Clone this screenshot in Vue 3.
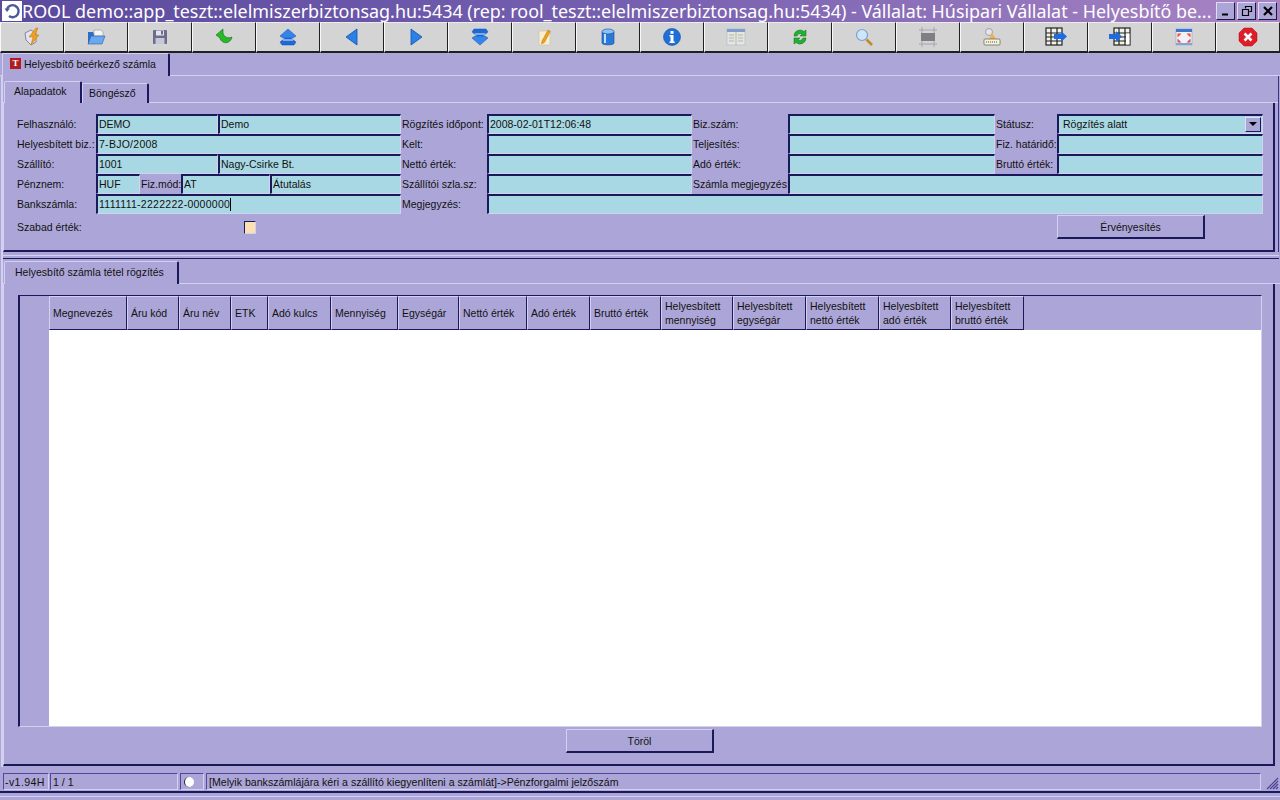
<template>
  <div class="win">
    <div class="titlebar">
      <span class="appicon">
        <svg width="18" height="18" viewBox="0 0 18 18"><path d="M4 7 A6 6 0 1 1 6 14" fill="none" stroke="#4a5a9a" stroke-width="2.4" /><path d="M1.5 6.5 L7 6.5 L4 10 Z" fill="#4a5a9a" /></svg>
      </span>
      <span class="title">ROOL demo::app_teszt::elelmiszerbiztonsag.hu:5434 (rep: rool_teszt::elelmiszerbiztonsag.hu:5434) - Vállalat: Húsipari Vállalat - Helyesbítő be...</span>
      <div class="winbtns">
        <span class="winbtn"><svg width="12" height="12" viewBox="0 0 12 12"><path d="M2 9.5h6" stroke="#000" stroke-width="2" /></svg></span>
        <span class="winbtn"><svg width="12" height="12" viewBox="0 0 12 12"><path d="M4.5 3.5V1.5h6v5h-2M1.5 4.5h6v6h-6z" fill="none" stroke="#000" stroke-width="1.2" /></svg></span>
        <span class="winbtn"><svg width="12" height="12" viewBox="0 0 12 12"><path d="M2 2l8 8M10 2l-8 8" stroke="#000" stroke-width="2.2" /></svg></span>
      </div>
    </div>

    <div class="toolbar">
      <button class="tb"><svg viewBox="0 0 20 20"><path d="M3 6l6-3 5 3v9l-5 3-5-5z" fill="#e4e4ee" stroke="#8484a4" /><path d="M14 1L7 10h4l-2 8 8-10h-4l3-7z" fill="#f0a020" stroke="#c07010" stroke-width=".5" /></svg></button>
      <button class="tb"><svg viewBox="0 0 20 20"><path d="M2 5h5l1 2h7v10H2z" fill="#2f6cc4" /><path d="M8 3h7l2 2v4H8z" fill="#f4f4f4" stroke="#9090a0" stroke-width=".6" /><path d="M2 17l3-8h14l-3 8z" fill="#6aa8ee" stroke="#2a5aa8" stroke-width=".6" /></svg></button>
      <button class="tb"><svg viewBox="0 0 20 20"><rect x="3" y="3" width="14" height="14" rx="1" fill="#6c6c8c" /><rect x="6" y="3.5" width="8" height="5" fill="#e4e4ec" /><rect x="5.5" y="11" width="9" height="6" fill="#c8c8d8" /><rect x="11" y="4" width="2" height="3.5" fill="#6c6c8c" /></svg></button>
      <button class="tb"><svg viewBox="0 0 20 20"><path d="M2 8L9 2V6C10 10 14 12 18 10C17 15 12 17 9 15C7 14 6 12 6 11Z" fill="#2ab82a" stroke="#0c7016" stroke-width=".6" /></svg></button>
      <button class="tb"><svg viewBox="0 0 20 20"><path d="M10 9l8 6-2 3H4l-2-3z" fill="#1f68d8" stroke="#1250b0" stroke-width=".5" /><path d="M10 2l8 7-3 2H5L2 9z" fill="#3484ea" stroke="#1250b0" stroke-width=".5" /><path d="M5 13h10" stroke="#bcd8fa" stroke-width="1.2" /></svg></button>
      <button class="tb"><svg viewBox="0 0 20 20"><path d="M15 2v16L4 10z" fill="#2a80e4" stroke="#1250b0" stroke-width=".8" /></svg></button>
      <button class="tb"><svg viewBox="0 0 20 20"><path d="M5 2v16l11-8z" fill="#2a80e4" stroke="#1250b0" stroke-width=".8" /></svg></button>
      <button class="tb"><svg viewBox="0 0 20 20"><path d="M10 11l8-6-2-3H4L2 5z" fill="#1f68d8" stroke="#1250b0" stroke-width=".5" /><path d="M10 18l8-7-3-2H5L2 11z" fill="#3484ea" stroke="#1250b0" stroke-width=".5" /><path d="M5 7h10" stroke="#bcd8fa" stroke-width="1.2" /></svg></button>
      <button class="tb"><svg viewBox="0 0 20 20"><rect x="5" y="4" width="11" height="14" fill="#f6efcf" stroke="#c8c0a0" stroke-width=".6" /><path d="M8 14L14 3l2.4 1.4-6 11L7.5 17z" fill="#f0a020" stroke="#b87010" stroke-width=".5" /></svg></button>
      <button class="tb"><svg viewBox="0 0 20 20"><path d="M4 5v11c0 2.5 12 2.5 12 0V5z" fill="#2a78d8" stroke="#124a9a" stroke-width=".6" /><ellipse cx="10" cy="4.5" rx="6" ry="2.5" fill="#8cc0f4" stroke="#124a9a" stroke-width=".6" /><rect x="6" y="7" width="2" height="9" fill="#bfe0fc" /></svg></button>
      <button class="tb"><svg viewBox="0 0 20 20"><circle cx="10" cy="10" r="8.5" fill="#1f6fd8" stroke="#1250a0" stroke-width=".6" /><rect x="8.5" y="4" width="3" height="2.8" fill="#fff" /><path d="M7.5 8h4v6.5h1.2V16H7.5v-1.5h1V9.5h-1z" fill="#fff" /></svg></button>
      <button class="tb"><svg viewBox="0 0 20 20"><rect x="1" y="2" width="18" height="16" fill="#e6e6e0" stroke="#a8b4cc" stroke-width=".6" /><rect x="1" y="2" width="18" height="3" fill="#7e9ccc" /><path d="M10 5v13M3 8h5M12 8h5M3 11h5M12 11h5M3 14h5M12 14h5" stroke="#b4b4b0" /></svg></button>
      <button class="tb"><svg viewBox="0 0 20 20"><path d="M4 9a6 6 0 0 1 10-4.5L16 3v6h-6l2-2a3.5 3.5 0 0 0-5 2z" fill="#22b030" stroke="#0c7016" stroke-width=".5" /><path d="M16 11a6 6 0 0 1-10 4.5L4 17v-6h6l-2 2a3.5 3.5 0 0 0 5-2z" fill="#22b030" stroke="#0c7016" stroke-width=".5" /></svg></button>
      <button class="tb"><svg viewBox="0 0 20 20"><circle cx="8" cy="8" r="5.5" fill="#cfe6fa" stroke="#7aa0c8" stroke-width="1.2" /><path d="M12.5 12.5l5.5 5.5" stroke="#c08a30" stroke-width="2.6" /></svg></button>
      <button class="tb"><svg viewBox="0 0 20 20"><path d="M1 3h18M1 17h18M4 0v20M16 0v20" stroke="#a4a4ae" /><rect x="3" y="6" width="14" height="8" fill="#808084" /></svg></button>
      <button class="tb"><svg viewBox="0 0 20 20"><circle cx="7" cy="5" r="3.5" fill="#e4e4ec" stroke="#9090a0" stroke-width=".8" /><path d="M10 6l4 6H7z" fill="#f0b050" /><rect x="2" y="12" width="16" height="6" rx="1" fill="#f4f2dc" stroke="#707060" stroke-width=".8" /><path d="M4 15h12" stroke="#505050" stroke-dasharray="1 1" /></svg></button>
      <button class="tb"><svg class="wide" viewBox="0 0 22 20"><rect x="1" y="1" width="16" height="17" fill="#f2f2e8" stroke="#222" stroke-width="1.2" /><path d="M1 6h16M1 10h16M1 14h16M6 1v17M12 1v17" stroke="#222" stroke-width="1.2" /><path d="M9 7h7V4l6 5.5-6 5.5v-3H9z" fill="#1c6ce0" /></svg></button>
      <button class="tb"><svg class="wide" viewBox="0 0 22 20"><rect x="5" y="1" width="16" height="17" fill="#f2f2e8" stroke="#222" stroke-width="1.2" /><path d="M5 6h16M5 10h16M5 14h16M10 1v17M16 1v17" stroke="#222" stroke-width="1.2" /><rect x="17" y="6.5" width="3.5" height="11" fill="#fff" /><path d="M0 7h7V4l6 5.5-6 5.5v-3H0z" fill="#1c6ce0" /></svg></button>
      <button class="tb"><svg viewBox="0 0 20 20"><rect x="2" y="2" width="16" height="16" fill="#f0f0f6" stroke="#8aa4cc" stroke-width=".6" /><rect x="2" y="2" width="16" height="3" fill="#3a78d0" /><rect x="2" y="16" width="16" height="2" fill="#7ea4dc" /><path d="M3.5 6.5h4l-4 4zM16.500 6.500h-4l4 4zM3.500 15.500h4l-4-4zM16.500 15.500h-4l4-4z" fill="#e84c40" /></svg></button>
      <button class="tb"><svg viewBox="0 0 20 20"><path d="M6 1h8l5 5v8l-5 5H6l-5-5V6z" fill="#e01c28" stroke="#a80c14" stroke-width=".5" /><path d="M6.5 6.5l7 7M13.5 6.5l-7 7" stroke="#fff" stroke-width="2.6" /></svg></button>
    </div>

    <div class="tabstrip outer-strip">
      <div class="tab tab-doc"><span class="t-icon">T</span>Helyesbítő beérkező számla</div>
    </div>

    <div class="pane">
      <div class="upper">
        <div class="tabstrip form-strip">
          <div class="tab tab-a">Alapadatok</div>
          <div class="tab tab-b">Böngésző</div>
        </div>
        <div class="panel form-panel">
          <div class="form">
            <label class="l">Felhasználó:</label>
            <div class="f s3">DEMO</div>
            <div class="f s2">Demo</div>
            <label class="l m">Rögzítés időpont:</label>
            <div class="f">2008-02-01T12:06:48</div>
            <label class="l m">Biz.szám:</label>
            <div class="f"></div>
            <label class="l m">Státusz:</label>
            <div class="f sel">Rögzítés alatt<span class="arrow"></span></div>

            <label class="l">Helyesbített biz.:</label>
            <div class="f s5 spaced">7-BJO/2008</div>
            <label class="l m">Kelt:</label>
            <div class="f"></div>
            <label class="l m">Teljesítés:</label>
            <div class="f"></div>
            <label class="l m">Fiz. határidő:</label>
            <div class="f"></div>

            <label class="l">Szállító:</label>
            <div class="f s3">1001</div>
            <div class="f s2">Nagy-Csirke Bt.</div>
            <label class="l m">Nettó érték:</label>
            <div class="f"></div>
            <label class="l m">Adó érték:</label>
            <div class="f"></div>
            <label class="l m">Bruttó érték:</label>
            <div class="f"></div>

            <label class="l">Pénznem:</label>
            <div class="f">HUF</div>
            <label class="l m">Fiz.mód:</label>
            <div class="f s2">AT</div>
            <div class="f">Átutalás</div>
            <label class="l m">Szállítói szla.sz:</label>
            <div class="f"></div>
            <label class="l m">Számla megjegyzés:</label>
            <div class="f s3"></div>

            <label class="l">Bankszámla:</label>
            <div class="f s5 spaced">1111111-2222222-0000000<span class="caret"></span></div>
            <label class="l m">Megjegyzés:</label>
            <div class="f s5"></div>

            <label class="l last">Szabad érték:</label>
            <span class="check"></span>
            <button class="btn valid">Érvényesítés</button>
          </div>
        </div>
      </div>

      <div class="splitter"></div>

      <div class="tabstrip items-strip">
        <div class="tab tab-items">Helyesbítő számla tétel rögzítés</div>
      </div>
      <div class="panel grid-panel">
        <div class="table">
          <div class="gutter"></div>
          <div class="tablebody">
            <div class="thead">
              <div v-for="c in columns" :key="c.label" class="th" :style="{ width: c.w + 'px' }">{{ c.label }}</div>
            </div>
            <div class="rows"></div>
          </div>
        </div>
        <div class="actions"><button class="btn del">Töröl</button></div>
      </div>
    </div>

    <div class="statusbar">
      <div class="st st-ver">-v1.94H</div>
      <div class="st st-pos">1 / 1</div>
      <div class="st st-led"><span class="led"></span></div>
      <div class="st st-msg">[Melyik bankszámlájára kéri a szállító kiegyenlíteni a számlát]-&gt;Pénzforgalmi jelzőszám</div>
      <svg class="grip" width="14" height="14" viewBox="0 0 14 14"><path d="M13 2L2 13M13 5L5 13M13 8L8 13M13 11l-2 2" stroke="#4a4290" stroke-width="1.2" /></svg>
    </div>
    <div class="footer"></div>
  </div>
</template>

<script setup>
const columns = [
  { label: 'Megnevezés', w: 78 },
  { label: 'Áru kód', w: 52 },
  { label: 'Áru név', w: 52 },
  { label: 'ETK', w: 37 },
  { label: 'Adó kulcs', w: 63 },
  { label: 'Mennyiség', w: 67 },
  { label: 'Egységár', w: 61 },
  { label: 'Nettó érték', w: 68 },
  { label: 'Adó érték', w: 63 },
  { label: 'Bruttó érték', w: 71 },
  { label: 'Helyesbített\nmennyiség', w: 72 },
  { label: 'Helyesbített\negységár', w: 73 },
  { label: 'Helyesbített\nnettó érték', w: 73 },
  { label: 'Helyesbített\nadó érték', w: 72 },
  { label: 'Helyesbített\nbruttó érték', w: 73 },
]
</script>

<style>
html, body { margin: 0; background: #aca6d8; overflow: hidden; }
</style>

<style scoped>
* { box-sizing: border-box; }
.win {
  width: 1280px;
  height: 800px;
  display: flex;
  flex-direction: column;
  background: #aca6d8;
  font-family: "Liberation Sans", Arial, sans-serif;
  font-size: 10.5px;
  color: #111;
  overflow: hidden;
}

/* title bar */
.titlebar {
  height: 22px;
  flex: none;
  display: flex;
  align-items: center;
  padding-left: 2px;
  background: linear-gradient(90deg, #5a4a9e, #7660b0 50%, #a884c4);
}
.appicon { width: 20px; height: 20px; background: #fff; display: flex; align-items: center; justify-content: center; flex: none; }
.title { color: #fff; font-family: "Noto Sans", sans-serif; font-size: 17.9px; white-space: nowrap; width: 1194px; flex: none; overflow: hidden; }
.winbtns { display: flex; gap: 2px; }
.winbtn {
  width: 19px;
  height: 18px;
  background: #aca6d8;
  border: 1px solid;
  border-color: #e0dcf4 #1a1a40 #1a1a40 #e0dcf4;
  display: flex;
  align-items: center;
  justify-content: center;
}

/* toolbar */
.toolbar { height: 31px; flex: none; display: flex; }
.tb {
  width: 64px;
  height: 31px;
  padding: 0;
  background: #d4d4d4;
  border: 0;
  border-top: 1px solid #ececec;
  border-left: 1px solid #fafafa;
  border-right: 1px solid #202020;
  border-bottom: 2px solid #202020;
  display: flex;
  align-items: center;
  justify-content: center;
}
.tb svg { width: 20px; height: 20px; display: block; }
.tb svg.wide { width: 22px; }

/* tabs */
.tabstrip { display: flex; align-items: flex-end; border-bottom: 1px solid #d4d0f0; flex: none; }
.tab {
  background: #aca6d8;
  border-top: 1px solid #d4d0f0;
  border-left: 1px solid #d4d0f0;
  border-right: 2px solid #1a1a5a;
  border-radius: 2px 2px 0 0;
  white-space: nowrap;
  display: flex;
  align-items: center;
  margin-bottom: -1px;
}
.outer-strip { height: 23px; padding-left: 2px; }
.tab-doc { width: 168px; height: 23px; padding-left: 7px; padding-bottom: 3px; }
.t-icon {
  width: 11px;
  height: 11px;
  margin-right: 3px;
  background: #b01c20;
  color: #fff;
  font: bold 9px/11px "Liberation Serif", serif;
  text-align: center;
}
.form-strip { height: 27px; padding-left: 1px; }
.tab-a { width: 78px; height: 22px; padding-left: 9px; padding-bottom: 3px; }
.tab-b { width: 67px; height: 20px; padding-left: 6px; padding-bottom: 1px; }

/* panes */
.pane { flex: none; height: 691px; margin-left: 1px; border-left: 2px solid #d4d0f0; }
.upper { border-right: 1px solid #3a3480; margin-right: 1px; }
.panel { border-right: 2px solid #1a1a5a; border-bottom: 2px solid #1a1a5a; border-left: 1px solid #d4d0f0; }
.form-panel { height: 149px; margin-right: 3px; padding: 11px 0 0 13px; }
.splitter { height: 7px; margin-right: 1px; border-bottom: 1px solid #1a1a5a; }
.splitter::before { content: ""; display: block; height: 3px; border-bottom: 1px solid #d4d0f0; }
.items-strip { height: 25px; padding-left: 1px; }
.tab-items { width: 175px; height: 23px; padding-left: 10px; padding-bottom: 3px; }
.grid-panel { height: 482px; margin-right: 5px; padding: 11px 0 0 14px; }

/* form */
.form {
  display: grid;
  grid-template-columns: 79px 44px 41px 37px 52px 131px 86px 205px 96px 207px 62px 206px;
  grid-auto-rows: 20px;
  white-space: nowrap;
}
.l { display: flex; align-items: center; padding-bottom: 1px; }
.m { padding-left: 1px; }
.f {
  background: #a8d8e4;
  border-top: 2px solid #1a1a5a;
  border-left: 2px solid #1a1a5a;
  border-right: 1px solid #d4d0f0;
  border-bottom: 1px solid #d4d0f0;
  padding-left: 1px;
  line-height: 15px;
  display: flex;
  align-items: center;
  position: relative;
}
.s2 { grid-column: span 2; }
.s3 { grid-column: span 3; }
.s5 { grid-column: span 5; }
.spaced { letter-spacing: .27px; }
.sel { padding-left: 4px; }
.arrow {
  position: absolute;
  right: 1px;
  top: 1px;
  width: 16px;
  height: 15px;
  background: #aca6d8;
  border: 1px solid;
  border-color: #e0dcf4 #1a1a5a #1a1a5a #e0dcf4;
}
.arrow::after {
  content: "";
  position: absolute;
  left: 3px;
  top: 4px;
  border: 4px solid transparent;
  border-top: 4px solid #000;
  border-bottom: 0;
}
.caret { display: inline-block; width: 1px; height: 13px; background: #000; }
.last { height: 26px; grid-column: span 4; }
.check {
  width: 12px;
  height: 13px;
  margin: 7px 0 0 26px;
  grid-column: 5;
  background: #fde0b0;
  border-top: 1px solid #1a1a5a;
  border-left: 1px solid #1a1a5a;
  border-right: 1px solid #d4d0f0;
  border-bottom: 1px solid #d4d0f0;
}
.btn {
  background: #aca6d8;
  border: 0;
  border-top: 1px solid #d4d0f0;
  border-left: 1px solid #d4d0f0;
  border-right: 2px solid #1a1a5a;
  border-bottom: 2px solid #1a1a5a;
  font: inherit;
  color: #111;
  padding: 0;
}
.valid { grid-column: 12; width: 148px; height: 24px; margin-top: 1px; }

/* table */
.table {
  display: flex;
  width: 1244px;
  height: 432px;
  border-top: 1px solid #1a1a5a;
  border-left: 2px solid #1a1a5a;
  border-right: 1px solid #d4d0f0;
  border-bottom: 1px solid #d4d0f0;
}
.gutter { width: 29px; flex: none; }
.tablebody { flex: 1; display: flex; flex-direction: column; }
.thead { height: 34px; flex: none; display: flex; }
.th {
  height: 34px;
  flex: none;
  padding-left: 3px;
  display: flex;
  align-items: center;
  white-space: pre-line;
  line-height: 14px;
  border-top: 1px solid #d4d0f0;
  border-left: 1px solid #d4d0f0;
  border-right: 1px solid #1a1a5a;
  border-bottom: 1px solid #1a1a5a;
}
.rows { flex: 1; background: #fff; }
.actions { display: flex; justify-content: center; margin-top: 2px; padding-right: 11px; }
.del { width: 148px; height: 24px; }

/* status bar */
.statusbar { height: 18px; margin-top: 6px; flex: none; display: flex; padding-left: 3px; gap: 1px; position: relative; white-space: nowrap; font-size: 10.6px; }
.st {
  height: 17px;
  padding-left: 2px;
  border-top: 1px solid #5048a0;
  border-left: 1px solid #5048a0;
  border-right: 1px solid #d4d0f0;
  border-bottom: 1px solid #d4d0f0;
  display: flex;
  align-items: center;
}
.st-ver { width: 46px; padding-left: 1px; letter-spacing: .4px; }
.st-pos { width: 128px; }
.st-led { width: 24px; margin-left: 1px; }
.st-msg { width: 1055px; margin-left: 1px; }
.led { width: 10px; height: 10px; margin-left: 1px; border-radius: 50%; background: #fff; border-left: 1px solid #222; }
.grip { position: absolute; right: 1px; top: 3px; }
.footer { flex: 1; border-top: 2px solid #1a1a5a; position: relative; }
.footer::after { content: ""; display: block; height: 3px; border-bottom: 1px solid #d4d0f0; }
</style>
